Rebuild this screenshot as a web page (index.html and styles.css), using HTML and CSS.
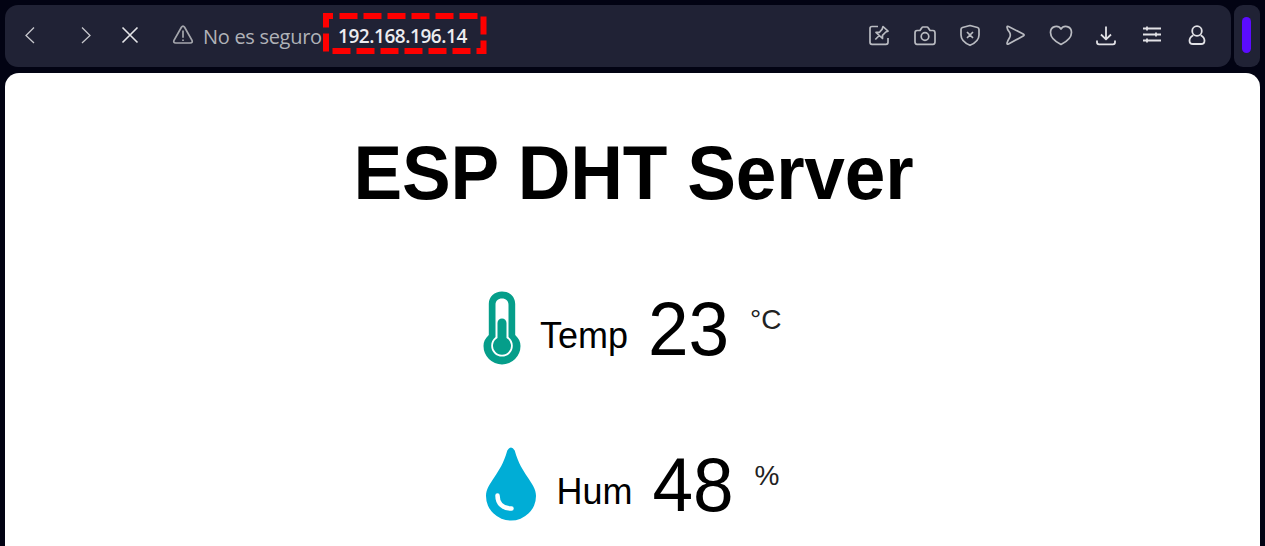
FILE: index.html
```html
<!DOCTYPE html>
<html lang="es">
<head>
<meta charset="utf-8">
<title>ESP DHT Server</title>
<link rel="stylesheet" href="styles.css">
</head>
<body>
<header class="chrome">
  <div class="toolbar">
    <svg class="nav back" viewBox="0 0 20 20"><path d="M14 2.500 6 10.500l8 7.500"/></svg>
    <svg class="nav forward" viewBox="0 0 20 20"><path d="M6 2.500l8 8-8 7.500"/></svg>
    <svg class="nav stop" viewBox="0 0 20 20"><path d="m2.500 2.500 15 15m0-15-15 15"/></svg>
    <svg class="warning" viewBox="0 0 22 20"><path d="M9.400 2.300Q11 0 12.600 2.300L20 15.300Q21 18 18.300 18H3.700Q1 18 2 15.300ZM11 5.500v7.300M11 14.500v1.500"/></svg>
    <span class="insecure">No es seguro</span>
    <span class="address">192.168.196.14
      <svg class="mark" viewBox="0 0 164 42"><path d="M3 14.500V3h7M16.500 3h18M40.500 3h18M64.500 3h18M88.500 3h18M112.500 3h18M136.500 3h18M160.500 3.500v18M160.500 27.500V38h-7M147.500 38h-18M123.500 38h-18M99.500 38h-18M75.500 38h-18M51.500 38h-18M27.500 38h-18M3 38.500v-18"/></svg>
    </span>
    <div class="actions">
      <svg viewBox="0 0 24 24"><path d="M11 3.500H5Q3 3.500 3 5.500v13.800Q3 21.300 5 21.300h14Q21 21.300 21 19.300V15M16 3.500l5 4.700-2.200.8-3.300 3.300v3.200l-3.200-3-3.300-3.200h3.500l2.700-3.200ZM12.300 12.500 8.300 16.500"/></svg>
      <svg viewBox="0 0 24 24"><path d="M4 7.500h3l2-3q.3-.5 1-.500h4q.7 0 1 .5l2 3h3q2 0 2 2.500v8.800q0 2.500-2 2.500H4q-2 0-2-2.500V10Q2 7.500 4 7.500Z"/><circle cx="12" cy="13.500" r="3.800"/></svg>
      <svg viewBox="0 0 24 24"><path d="M12 2.500 19.500 4.500q1.500.5 1.500 2V12q0 6.500-9 10.300Q3 18.500 3 12V6.500q0-1.500 1.500-2ZM9 9l6 6m0-6-6 6"/></svg>
      <svg viewBox="0 0 24 24"><path d="M4 4.300q0-1.500 1.500-.8L20.200 11q1.800 1 0 2L5.500 21q-1.500.8-1.500-.8.300-2 2.800-6 1-2.200 0-4.400Q4 6.500 4 4.300Z"/></svg>
      <svg viewBox="0 0 24 24"><path d="M12 6C9.500 1.800 1.500 2.500 1.500 9.500c0 5 5.500 9.500 10.500 12 5-2.500 10.500-7 10.500-12C22.500 2.500 14.500 1.800 12 6Z"/></svg>
      <svg class="bright" viewBox="0 0 24 24"><path d="M12 3.500V16M7 11.500l5 4.800 5-4.800M3 17.500v1.800q0 2 2 2h14q2 0 2-2v-1.800"/></svg>
      <svg class="bright" viewBox="0 0 24 24"><path d="M3 5.500h18M3 11.500h18M3 17.500h18M7 3.500v4M16 9.500v4M7 15.500v4"/></svg>
      <svg class="bright" viewBox="0 0 24 24"><circle cx="12" cy="8" r="4.800"/><path d="M8.300 12.200Q4.500 14.200 4.500 17.700q0 3.300 3.500 3.300h8q3.500 0 3.500-3.300 0-3.500-3.800-5.500"/></svg>
    </div>
  </div>
  <div class="side"><div class="handle"></div></div>
</header>
<main class="page">
  <h1>ESP DHT Server</h1>
  <section class="reading temperature">
    <svg class="thermometer" viewBox="0 0 38 74"><path fill="#059e8a" d="M19 .5c7.500 0 13.200 5 13.200 12.500v31C36 47.500 37.500 51 37.500 55a18.500 18.500 0 0 1-37 0c0-4 1.500-7.500 5.300-11V13C5.800 5.500 11.500.5 19 .5Z"/><path fill="#fff" d="M19 7.500c4 0 6.500 2.500 6.500 6.200v32.300c3 2.500 4.300 5.300 4.300 8.800a10.800 10.800 0 0 1-21.600 0c0-3.500 1.300-6.300 4.300-8.800V13.700C12.500 10 15 7.500 19 7.500Z"/><path fill="#059e8a" d="M14.500 47V32a4.500 4.500 0 0 1 9 0v15a9 9 0 1 1-9 0Z"/></svg>
    <span class="label">Temp</span>
    <span class="value">23</span>
    <span class="unit">°C</span>
  </section>
  <section class="reading humidity">
    <svg class="drop" viewBox="0 0 52 74"><path fill="#00add6" d="M22.300 3.500Q26-2.500 29.700 3.500C33.500 17 38 23 42.500 30S51 42 51 49a25 24.500 0 0 1-50 0c0-7 4-12 8.500-19S18.500 17 22.300 3.500Z"/><path fill="none" stroke="#fff" stroke-width="4.500" stroke-linecap="round" d="M12.500 48.500C12.500 57 18 61.500 26.500 61.500"/></svg>
    <span class="label">Hum</span>
    <span class="value">48</span>
    <span class="unit">%</span>
  </section>
</main>
</body>
</html>
```
FILE: styles.css
```css
* { box-sizing: border-box; }
body {
  margin: 0;
  height: 546px;
  overflow: hidden;
  background: #020313;
  font-family: "Liberation Sans", Arial, sans-serif;
  color: #000;
}
.chrome {
  display: flex;
  gap: 3px;
  height: 72.500px;
  padding: 4.500px 5px 6px 5px;
}
.toolbar {
  display: flex;
  align-items: center;
  width: 1226px;
  padding: 0 22px 0 15px;
  border-radius: 13px;
  background: #202235;
}
svg { display: block; flex: none; }
.nav {
  width: 20px;
  height: 20px;
  margin-bottom: 1px;
  fill: none;
  stroke: #c6c7cc;
  stroke-width: 1.3;
}
.forward { margin-left: 36px; }
.stop { margin-left: 24px; stroke: #e5e5e8; stroke-width: 1.6; }
.warning {
  width: 22px;
  height: 20px;
  margin-left: 32px;
  margin-bottom: 1px;
  fill: none;
  stroke: #a5a7ad;
  stroke-width: 1.7;
}
.insecure {
  margin: 2px 0 0 9px;
  width: 120px;
  font: 20px/24px "Open Sans", "Noto Sans", sans-serif;
  letter-spacing: -0.3px;
  color: #b0b2b8;
  white-space: nowrap;
}
.address {
  position: relative;
  margin-left: 15px;
  width: 132px;
  font: 600 19px/24px "Open Sans", "Noto Sans", sans-serif;
  letter-spacing: -0.45px;
  color: #ececf0;
  white-space: nowrap;
}
.mark {
  position: absolute;
  left: -15px;
  top: -10.500px;
  width: 164px;
  height: 42px;
  fill: none;
  stroke: #fe0000;
  stroke-width: 6;
}
.actions {
  display: flex;
  gap: 21.400px;
  margin-left: auto;
  margin-bottom: 2px;
}
.actions svg {
  width: 24px;
  height: 24px;
  fill: none;
  stroke: #b9bbc1;
  stroke-width: 1.7;
  stroke-linejoin: round;
}
.actions .bright { stroke: #e2e2e6; stroke-width: 1.8; }
.side {
  display: flex;
  align-items: center;
  justify-content: center;
  width: 26px;
  border-radius: 9px;
  background: #202235;
}
.handle {
  width: 9px;
  height: 36px;
  margin: 0 1px 1px 0;
  border-radius: 5px;
  background: #5b0cff;
}
.page {
  height: 473.500px;
  margin: 0 5px;
  padding-top: 64px;
  border-radius: 14px 14px 0 0;
  background: #fff;
}
h1 {
  margin: 0 0 0 348.500px;
  font-size: 73px;
  line-height: 74px;
  letter-spacing: -0.2px;
  white-space: nowrap;
  transform: scaleY(1.05);
  transform-origin: 0 62.500px;
}
.reading {
  display: flex;
  align-items: flex-start;
  height: 74px;
}
.temperature { margin: 80px 0 0 477.500px; }
.humidity { margin: 82px 0 0 480px; }
.thermometer { width: 38px; height: 74px; }
.drop { width: 52px; height: 74px; }
.label {
  width: 87px;
  margin: 27.500px 0 0 19.500px;
  font-size: 36px;
  line-height: 36px;
  transform: scaleY(1.03);
}
.value {
  width: 82px;
  margin: 2px 0 0 21px;
  font-size: 73px;
  line-height: 74px;
  transform: scaleY(1.04);
  transform-origin: 0 62px;
}
.unit {
  margin: 15.500px 0 0 20px;
  font-size: 28px;
  line-height: 28px;
  color: #222;
}
.humidity .label { width: 75px; }
```
